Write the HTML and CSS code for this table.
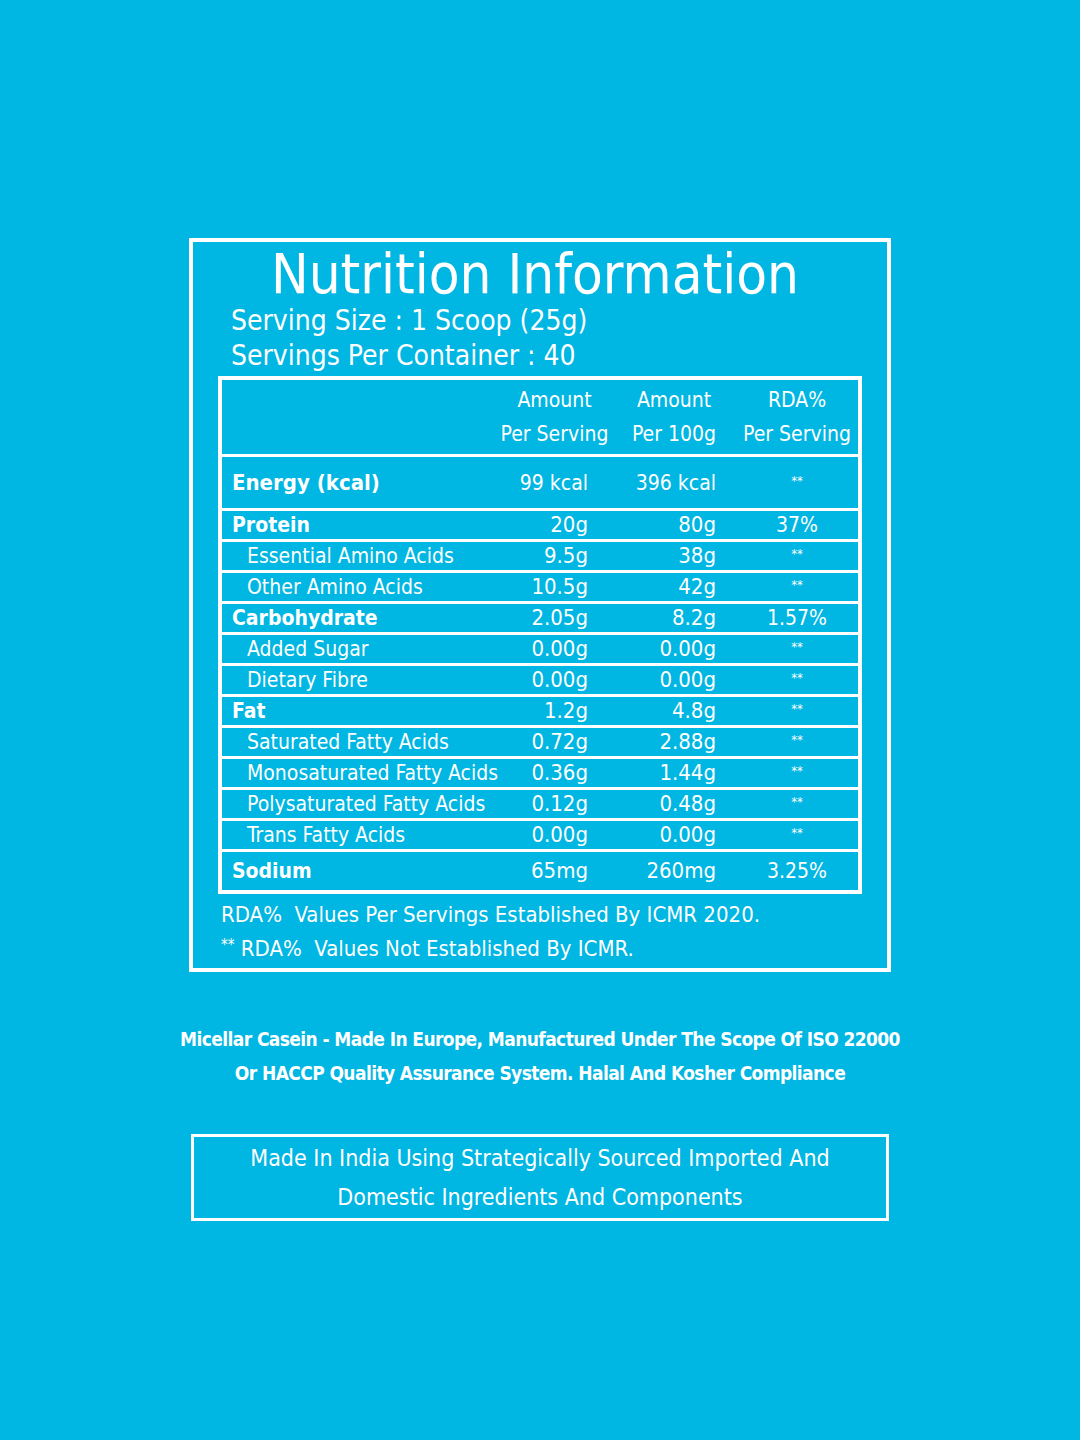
FILE: index.html
```html
<!DOCTYPE html>
<html>
<head>
<meta charset="utf-8">
<link rel="stylesheet" href="styles.css">
</head>
<body>
<div class="page">
  <section class="panel">
    <h1 class="title">Nutrition Information</h1>
    <div class="serving">
      <div>Serving Size : 1 Scoop (25g)</div>
      <div>Servings Per Container : 40</div>
    </div>
    <table class="facts">
      <tr class="head">
        <th></th>
        <th>Amount<br>Per Serving</th>
        <th>Amount<br>Per 100g</th>
        <th>RDA%<br>Per Serving</th>
      </tr>
      <tr class="energy main">
        <td class="label">Energy (kcal)</td>
        <td class="c2 kc">99 kcal</td>
        <td class="c3 kc">396 kcal</td>
        <td class="c4"><span class="ast">**</span></td>
      </tr>
      <tr class="main">
        <td class="label">Protein</td><td class="c2">20g</td><td class="c3">80g</td><td class="c4">37%</td>
      </tr>
      <tr class="sub">
        <td class="label">Essential Amino Acids</td><td class="c2">9.5g</td><td class="c3">38g</td><td class="c4"><span class="ast">**</span></td>
      </tr>
      <tr class="sub">
        <td class="label">Other Amino Acids</td><td class="c2">10.5g</td><td class="c3">42g</td><td class="c4"><span class="ast">**</span></td>
      </tr>
      <tr class="main">
        <td class="label">Carbohydrate</td><td class="c2">2.05g</td><td class="c3">8.2g</td><td class="c4">1.57%</td>
      </tr>
      <tr class="sub">
        <td class="label">Added Sugar</td><td class="c2">0.00g</td><td class="c3">0.00g</td><td class="c4"><span class="ast">**</span></td>
      </tr>
      <tr class="sub">
        <td class="label">Dietary Fibre</td><td class="c2">0.00g</td><td class="c3">0.00g</td><td class="c4"><span class="ast">**</span></td>
      </tr>
      <tr class="main">
        <td class="label">Fat</td><td class="c2">1.2g</td><td class="c3">4.8g</td><td class="c4"><span class="ast">**</span></td>
      </tr>
      <tr class="sub">
        <td class="label">Saturated Fatty Acids</td><td class="c2">0.72g</td><td class="c3">2.88g</td><td class="c4"><span class="ast">**</span></td>
      </tr>
      <tr class="sub">
        <td class="label">Monosaturated Fatty Acids</td><td class="c2">0.36g</td><td class="c3">1.44g</td><td class="c4"><span class="ast">**</span></td>
      </tr>
      <tr class="sub">
        <td class="label">Polysaturated Fatty Acids</td><td class="c2">0.12g</td><td class="c3">0.48g</td><td class="c4"><span class="ast">**</span></td>
      </tr>
      <tr class="sub">
        <td class="label">Trans Fatty Acids</td><td class="c2">0.00g</td><td class="c3">0.00g</td><td class="c4"><span class="ast">**</span></td>
      </tr>
      <tr class="main sodium">
        <td class="label">Sodium</td><td class="c2">65mg</td><td class="c3">260mg</td><td class="c4">3.25%</td>
      </tr>
    </table>
    <div class="notes">
      <div>RDA%&nbsp; Values Per Servings Established By ICMR 2020.</div>
      <div><span class="note-ast">**</span> RDA%&nbsp; Values Not Established By ICMR.</div>
    </div>
  </section>

  <p class="origin">Micellar Casein - Made In Europe, Manufactured Under The Scope Of ISO 22000<br>Or HACCP Quality Assurance System. Halal And Kosher Compliance</p>

  <div class="made">Made In India Using Strategically Sourced Imported And<br>Domestic Ingredients And Components</div>
</div>
</body>
</html>
```

FILE: styles.css
```css
html, body {
  margin: 0;
  padding: 0;
  background: #00b6e2;
}
body {
  font-family: "DejaVu Sans Condensed", "Liberation Sans Narrow", "DejaVu Sans", sans-serif;
  font-stretch: condensed;
  color: #ffffff;
  width: 1080px;
  height: 1440px;
}
.page {
  padding-top: 238px;
  display: flex;
  flex-direction: column;
  align-items: center;
}
.panel {
  width: 694px;
  height: 726px;
  border: 4px solid #ffffff;
  box-sizing: content-box;
  padding: 0;
}
.title {
  margin: 0;
  padding-top: 3px;
  font-size: 56px;
  font-weight: normal;
  line-height: 58px;
  text-align: center;
  padding-right: 10px;
}
.serving {
  margin-left: 38px;
  font-size: 28px;
  line-height: 35px;
}
.facts {
  margin: 3px 25px 0 25px;
  width: 644px;
  border-collapse: collapse;
  border: 4px solid #ffffff;
  table-layout: fixed;
}
.facts td, .facts th {
  padding: 0;
  vertical-align: middle;
}
.facts tr + tr td {
  border-top: 3px solid #ffffff;
}
.facts th {
  font-weight: normal;
  font-size: 21px;
  line-height: 34px;
  height: 74px;
  text-align: center;
}
.facts th:nth-child(1) { width: 275px; }
.facts th:nth-child(2) { width: 115px; }
.facts th:nth-child(3) { width: 124px; }
.facts th:nth-child(4) { width: 122px; }

.facts .label {
  text-align: left;
  white-space: nowrap;
}
.facts .main .label {
  font-weight: bold;
  font-size: 21px;
  padding-left: 10px;
}
.facts .energy .label {
  font-size: 22px;
}
.facts .sub .label {
  font-size: 21px;
  padding-left: 25px;
}
.facts tr.main td, .facts tr.sub td {
  height: 28px;
  line-height: 28px;
}
.facts tr.energy td {
  height: 51px;
}
.facts tr.sodium td {
  height: 38px;
}
.facts .c2, .facts .c3 {
  text-align: right;
  font-size: 22px;
}
.facts .c2 { padding-right: 24px; }
.facts .c3 { padding-right: 20px; }
.facts .c4 {
  text-align: center;
  font-size: 21px;
}
.facts .kc { font-size: 21px; }
.ast {
  font-size: 13px;
  line-height: 0;
  vertical-align: 5px;
}
.notes {
  margin: 4px 0 0 28px;
  font-size: 22px;
  line-height: 34px;
}
.note-ast {
  font-size: 15px;
  line-height: 0;
  vertical-align: 6px;
}
.origin {
  margin: 50px 0 0 0;
  text-align: center;
  font-weight: bold;
  font-size: 19px;
  letter-spacing: -0.6px;
  line-height: 34px;
}
.made {
  margin-top: 44px;
  width: 692px;
  border: 3px solid #ffffff;
  text-align: center;
  font-size: 23px;
  line-height: 39px;
  padding: 2px 0 1px 0;
}
```
